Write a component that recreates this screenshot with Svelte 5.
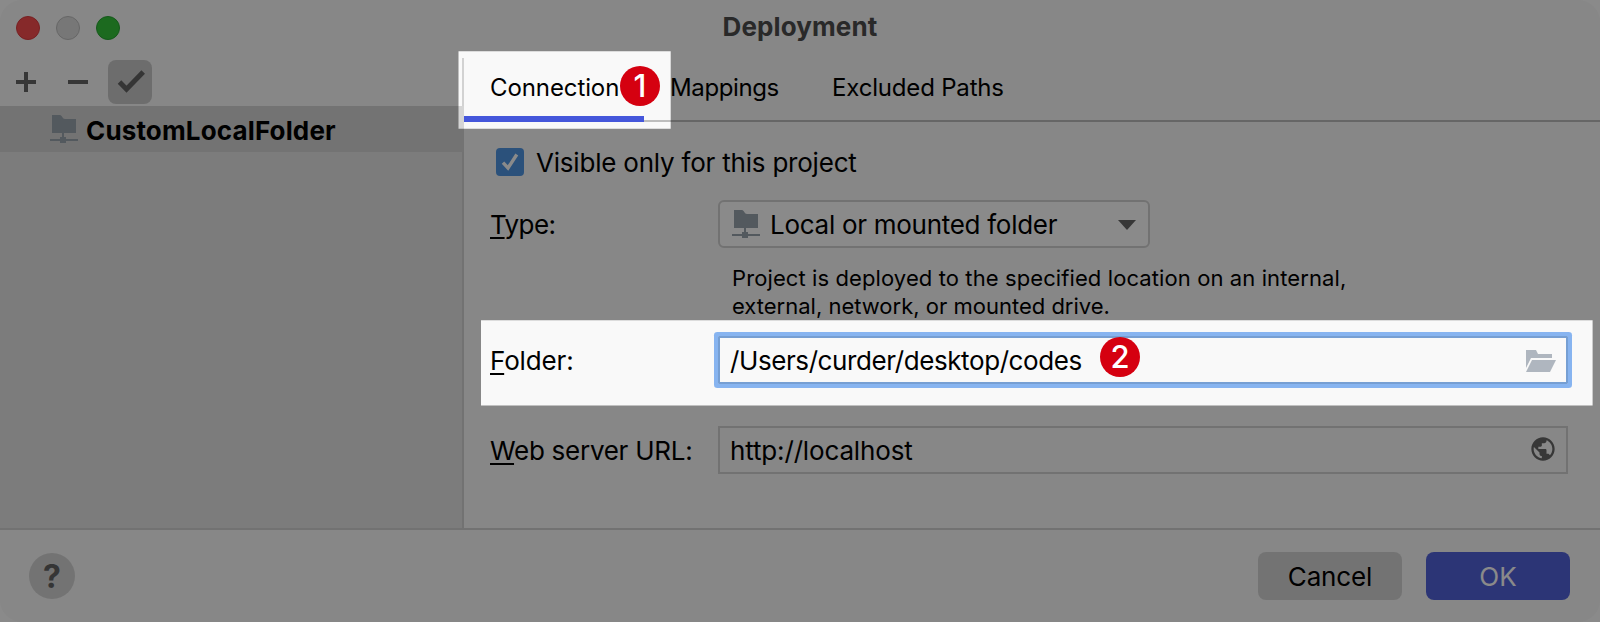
<script>
  const tabs = ['Connection', 'Mappings', 'Excluded Paths'];
</script>

{#snippet mounted()}
  <svg class="mounted" width="28" height="28" viewBox="0 0 28 28">
    <path d="M2 0h8c2 0 2.500 4 5 4h11v14H2z" />
    <path d="M12 18h2v4h2v2h12v2H16v2h-6v-2H0v-2h10v-2h2z" />
  </svg>
{/snippet}

<div class="window">
  <header>
    <div class="lights"><i class="red"></i><i class="grey"></i><i class="green"></i></div>
    <h1>Deployment</h1>
  </header>

  <div class="body">
    <aside>
      <div class="tools">
        <svg width="20" height="20"><path d="M8 0h4v8h8v4h-8v8H8v-8H0V8h8z" /></svg>
        <svg class="minus" width="20" height="20"><path d="M0 8h20v4H0z" /></svg>
        <button class="default">
          <svg width="44" height="44"><path d="M11.500 22 18.500 29.200 35.200 12" class="tick" /></svg>
        </button>
      </div>
      <div class="tree">
        <div class="row">{@render mounted()}<span class="name">CustomLocalFolder</span></div>
      </div>
    </aside>

    <main>
      <nav>
        {#each tabs as tab, i}
          <div class="tab tab{i}" class:active={i === 0}>{tab}</div>
        {/each}
      </nav>

      <label class="visible">
        <svg width="28" height="28"><rect width="28" height="28" rx="4" class="box" /><path d="M7 14.700 12 20 20.800 6.500" class="mark" /></svg>
        <span>Visible only for this project</span>
      </label>

      <div class="field type">
        <span class="label"><u>T</u>ype:</span>
        <div class="combo">
          {@render mounted()}
          <span>Local or mounted folder</span>
          <svg class="arrow" width="18" height="10"><path d="M0 0h18L9 10z" /></svg>
        </div>
      </div>
      <p><span>Project is deployed to the specified location on an internal,</span><br />external, network, or mounted drive.</p>

      <div class="field folder">
        <span class="label"><u>F</u>older:</span>
        <div class="input focused">
          <span>/Users/curder/desktop/codes</span>
          <svg width="30" height="22"><path d="M0 0h10l2 4h14v4H5L0 18z" /><path d="M6 10h24l-6 12H0z" /></svg>
        </div>
      </div>

      <div class="field url">
        <span class="label"><u>W</u>eb server URL:</span>
        <div class="input">
          <span>http://localhost</span>
          <svg class="globe" width="28" height="28" viewBox="0 0 24 24"><path d="M12 2C6.480 2 2 6.480 2 12s4.480 10 10 10 10-4.480 10-10S17.520 2 12 2zm-1 17.930c-3.950-.49-7-3.850-7-7.930 0-.62.080-1.210.21-1.790L9 15v1c0 1.100.9 2 2 2v1.930zm6.900-2.540c-.26-.81-1-1.390-1.900-1.390h-1v-3c0-.55-.45-1-1-1H8v-2h2c.55 0 1-.45 1-1V7h2c1.100 0 2-.9 2-2v-.41c2.930 1.190 5 4.060 5 7.410 0 2.080-.8 3.970-2.100 5.390z" /></svg>
        </div>
      </div>
    </main>
  </div>

  <footer>
    <button class="help">?</button>
    <button class="cancel">Cancel</button>
    <button class="ok">OK</button>
  </footer>

  <div class="dim"></div>
  <b class="badge one">1</b>
  <b class="badge two">2</b>
</div>

<style>
  :global(body) { margin: 0; background: #fff; }
  * { box-sizing: border-box; }
  .window {
    position: relative; width: 1600px; height: 622px; display: flex; flex-direction: column;
    background: #f9f9f9; border-radius: 22px; color: #000;
    font: 26px/32px Inter, sans-serif; white-space: nowrap;
  }
  svg { display: block; flex: none; }
  button { border: 0; padding: 0; font: inherit; color: inherit; }
  header { height: 58px; flex: none; display: grid; grid-template-columns: 1fr auto 1fr; padding: 0 16px; }
  .lights { display: flex; gap: 16px; padding-top: 16px; }
  .lights i { width: 24px; height: 24px; border-radius: 50%; border: 1px solid; }
  .lights .red { background: #f84c4e; border-color: #dc3c40; }
  .lights .grey { background: #dcdcdc; border-color: #bdbdbd; }
  .lights .green { background: #35c43a; border-color: #27a432; }
  h1 { margin: 11px 0 0; font-size: 26px; line-height: 32px; font-weight: 700; color: #4c4c4c; letter-spacing: 0.1px; }
  .body { display: flex; height: 472px; flex: none; border-bottom: 2px solid #d2d2d2; }
  aside { width: 464px; display: flex; flex-direction: column; border-right: 2px solid #d2d2d2; }
  .tools { height: 48px; display: flex; align-items: center; padding-left: 16px; fill: #666; }
  .minus { margin-left: 32px; }
  .default { margin-left: 20px; width: 44px; height: 44px; border-radius: 8px; background: #cacaca; }
  .tick { fill: none; stroke: #636363; stroke-width: 5; }
  .tree { flex: 1; background: #e6e6e6; }
  .row { height: 46px; margin-right: -2px; background: #d5d5d5; display: flex; align-items: center; padding-left: 50px; gap: 8px; font-weight: 700; }
  .name { letter-spacing: 0.15px; padding-top: 3px; }
  .mounted { fill: #9aa5ae; }
  main { flex: 1; }
  nav { height: 64px; display: flex; border-bottom: 2px solid #bdbdbd; font-size: 24px; }
  .tab { height: 64px; padding: 14px 26px 0; }
  .tab.active { border-bottom: 6px solid #4557db; }
  .tab0 { width: 180px; letter-spacing: -0.1px; }
  .tab1 { width: 162px; letter-spacing: -0.38px; }
  .tab2 { letter-spacing: -0.18px; }
  .visible { display: flex; gap: 12px; align-items: center; height: 32px; margin: 24px 0 0 32px; }
  .visible span { letter-spacing: -0.21px; padding-top: 2px; }
  .box { fill: #5096e4; }
  .mark { fill: none; stroke: #fff; stroke-width: 3.4; }
  .field { display: flex; align-items: center; padding-left: 26px; height: 48px; }
  .label { width: 228px; flex: none; padding-top: 2px; }
  u { text-decoration: underline 2px; text-underline-offset: 3px; text-decoration-skip-ink: none; }
  .type { margin-top: 22px; }
  .type .label { letter-spacing: -0.6px; }
  .folder .label { letter-spacing: -0.15px; }
  .url .label { letter-spacing: -0.27px; }
  .combo { width: 432px; height: 48px; border: 2px solid #d2d2d2; border-radius: 6px; background: #fff; display: flex; align-items: center; padding: 0 12px; gap: 10px; }
  .combo span { letter-spacing: -0.28px; padding-top: 2px; }
  .arrow { margin: 2px 0 1px auto; fill: #666; }
  p { margin: 16px 0 0 268px; font-size: 22px; line-height: 28px; }
  p span { letter-spacing: 0.1px; }
  .folder { margin-top: 16px; }
  .input { width: 850px; height: 48px; border: 2px solid #d2d2d2; display: flex; align-items: center; justify-content: space-between; padding: 0 9px 0 10px; }
  .input span { letter-spacing: -0.15px; padding-top: 2px; }
  .focused { border-color: #769fd3; box-shadow: 0 0 0 4px #87b4f0; border-radius: 1px; padding-right: 10px; }
  .focused span { letter-spacing: -0.41px; }
  .focused svg { fill: #afb6bf; margin-top: 1px; }
  .url { margin-top: 42px; }
  .globe { fill: #666; margin-top: -2px; }
  footer { flex: 1; display: flex; align-items: center; padding: 0 30px 0 29px; }
  .help { width: 46px; height: 46px; border-radius: 50%; background: #d5d5d5; color: #636363; font-size: 32px; font-weight: 700; padding-top: 2px; }
  .cancel, .ok { width: 144px; height: 48px; border-radius: 8px; background: #d5d5d5; padding-top: 2px; }
  .cancel { margin-left: auto; margin-right: 24px; letter-spacing: -0.15px; }
  .ok { background: #5263db; color: #fff; }
  .dim {
    position: absolute; inset: 0 0 auto; height: 622px; background: rgba(0, 0, 0, 0.46);
    clip-path: path(evenodd, "M0 0H1600V622H0ZM458.500 51.300H670.700V128.800H458.500ZM481 320.200H1592.600V405.600H481Z");
  }
  .badge {
    position: absolute; width: 40px; height: 40px; border-radius: 50%; background: #d50010; color: #fff;
    font-size: 31px; line-height: 40px; font-weight: 500; text-align: center;
  }
  .one { left: 620px; top: 66px; }
  .two { left: 1100px; top: 336.500px; }
</style>
